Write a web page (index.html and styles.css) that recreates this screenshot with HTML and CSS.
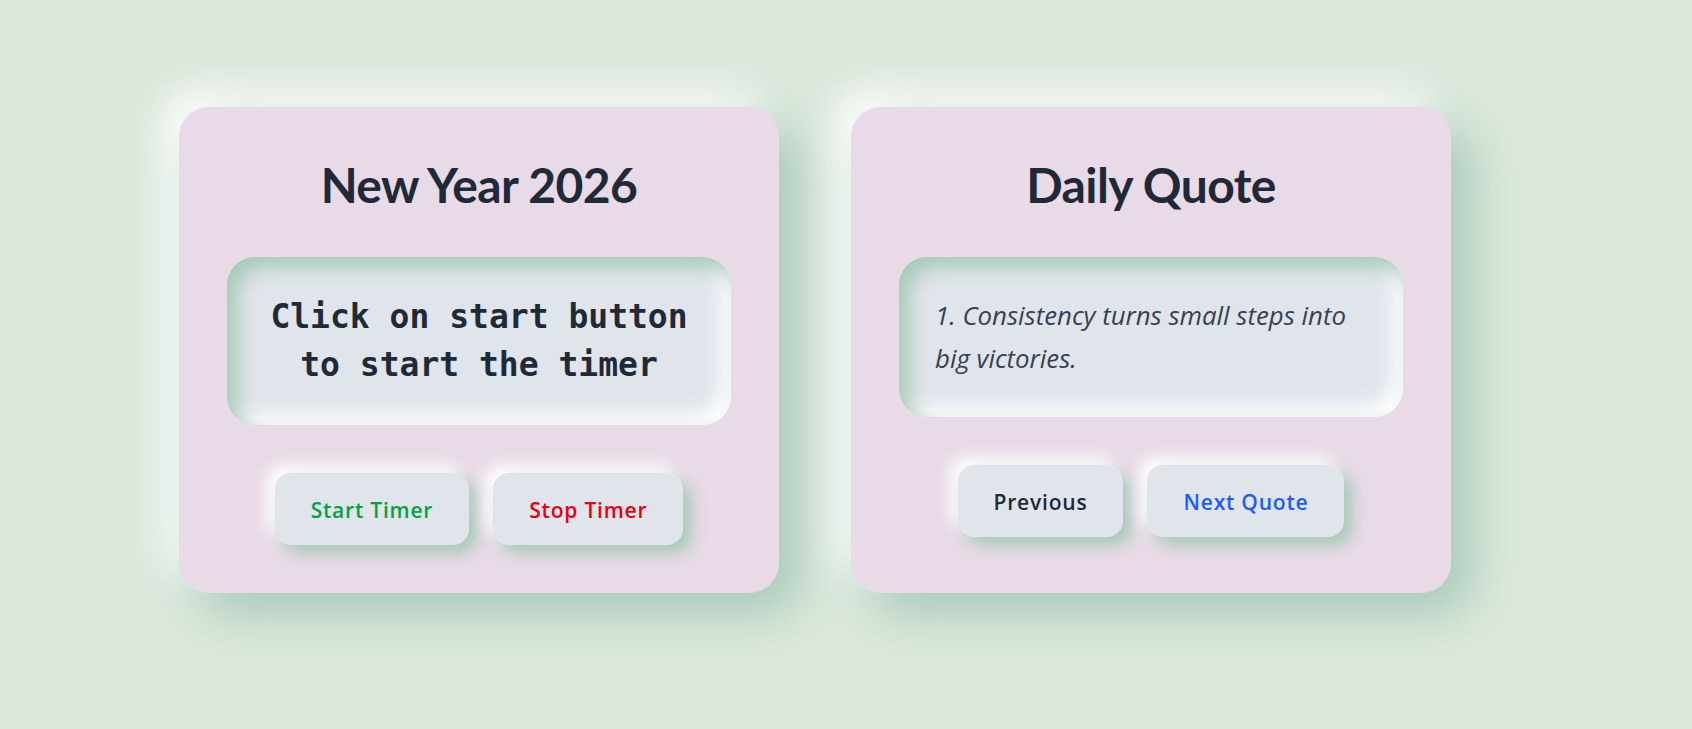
FILE: index.html
```html
<!DOCTYPE html>
<html lang="en">
<head>
<meta charset="utf-8">
<title>Neumorphic Widgets</title>
<link rel="stylesheet" href="styles.css">
</head>
<body>
<main class="board">
  <section class="card">
    <h1 class="card-title">New Year 2026</h1>
    <div class="display display-timer">
      <p class="timer-text">Click on start button to start the timer</p>
    </div>
    <div class="actions">
      <button class="btn btn-start">Start Timer</button>
      <button class="btn btn-stop">Stop Timer</button>
    </div>
  </section>
  <section class="card">
    <h1 class="card-title">Daily Quote</h1>
    <div class="display display-quote">
      <p class="quote-text">1. Consistency turns small steps into big victories.</p>
    </div>
    <div class="actions">
      <button class="btn btn-prev">Previous</button>
      <button class="btn btn-next">Next Quote</button>
    </div>
  </section>
</main>
</body>
</html>
```
FILE: styles.css
```css
* { box-sizing: border-box; }
html, body { margin: 0; padding: 0; }
body {
  background: #dce8dc;
  font-family: "Open Sans", "Noto Sans", sans-serif;
  color: #1f2937;
  min-height: 729px;
}
.board {
  display: flex;
  align-items: stretch;
  gap: 72px;
  padding: 107px 0 0 179px;
}
.card {
  width: 600px;
  background: #e8dae7;
  border-radius: 30px;
  padding: 48px;
  box-shadow: 20px 20px 50px #a6c9b7, -16px -16px 36px #ffffff;
  display: flex;
  flex-direction: column;
}
.card-title {
  margin: 0 0 44px;
  padding-top: 2px;
  font-family: Lato, "Open Sans", sans-serif;
  font-size: 48px;
  line-height: 56px;
  font-weight: 700;
  letter-spacing: -0.6px;
  text-align: center;
  color: #1f2937;
}
.display {
  background: #e0e5ec;
  border-radius: 28px;
  box-shadow: inset 10px 10px 20px #a6c9b7, inset -10px -10px 20px #ffffff;
}
.display-timer { padding: 36px 24px; }
.timer-text {
  margin: 0;
  font-family: "DejaVu Sans Mono", "Liberation Mono", monospace;
  font-weight: 700;
  font-size: 33px;
  line-height: 48px;
  text-align: center;
  color: #1f2937;
}
.display-quote { padding: 37px 36px; }
.quote-text {
  margin: 0;
  font-style: italic;
  font-size: 25.8px;
  line-height: 43px;
  color: #374151;
}
.actions {
  display: flex;
  justify-content: center;
  gap: 24px;
  margin-top: 48px;
}
.btn {
  border: none;
  background: #e0e5ec;
  border-radius: 16px;
  padding: 25px 36px 23px;
  font-family: "Open Sans", "Noto Sans", sans-serif;
  font-size: 21px;
  letter-spacing: 0.8px;
  line-height: 24px;
  font-weight: 600;
  box-shadow: 8px 8px 16px #a6c9b7, -8px -8px 16px #ffffff;
  cursor: pointer;
}
.btn-start { color: #00a344; }
.btn-stop { color: #e8000f; }
.btn-prev { color: #1f2937; }
.btn-next { color: #1d5bff; }
```
